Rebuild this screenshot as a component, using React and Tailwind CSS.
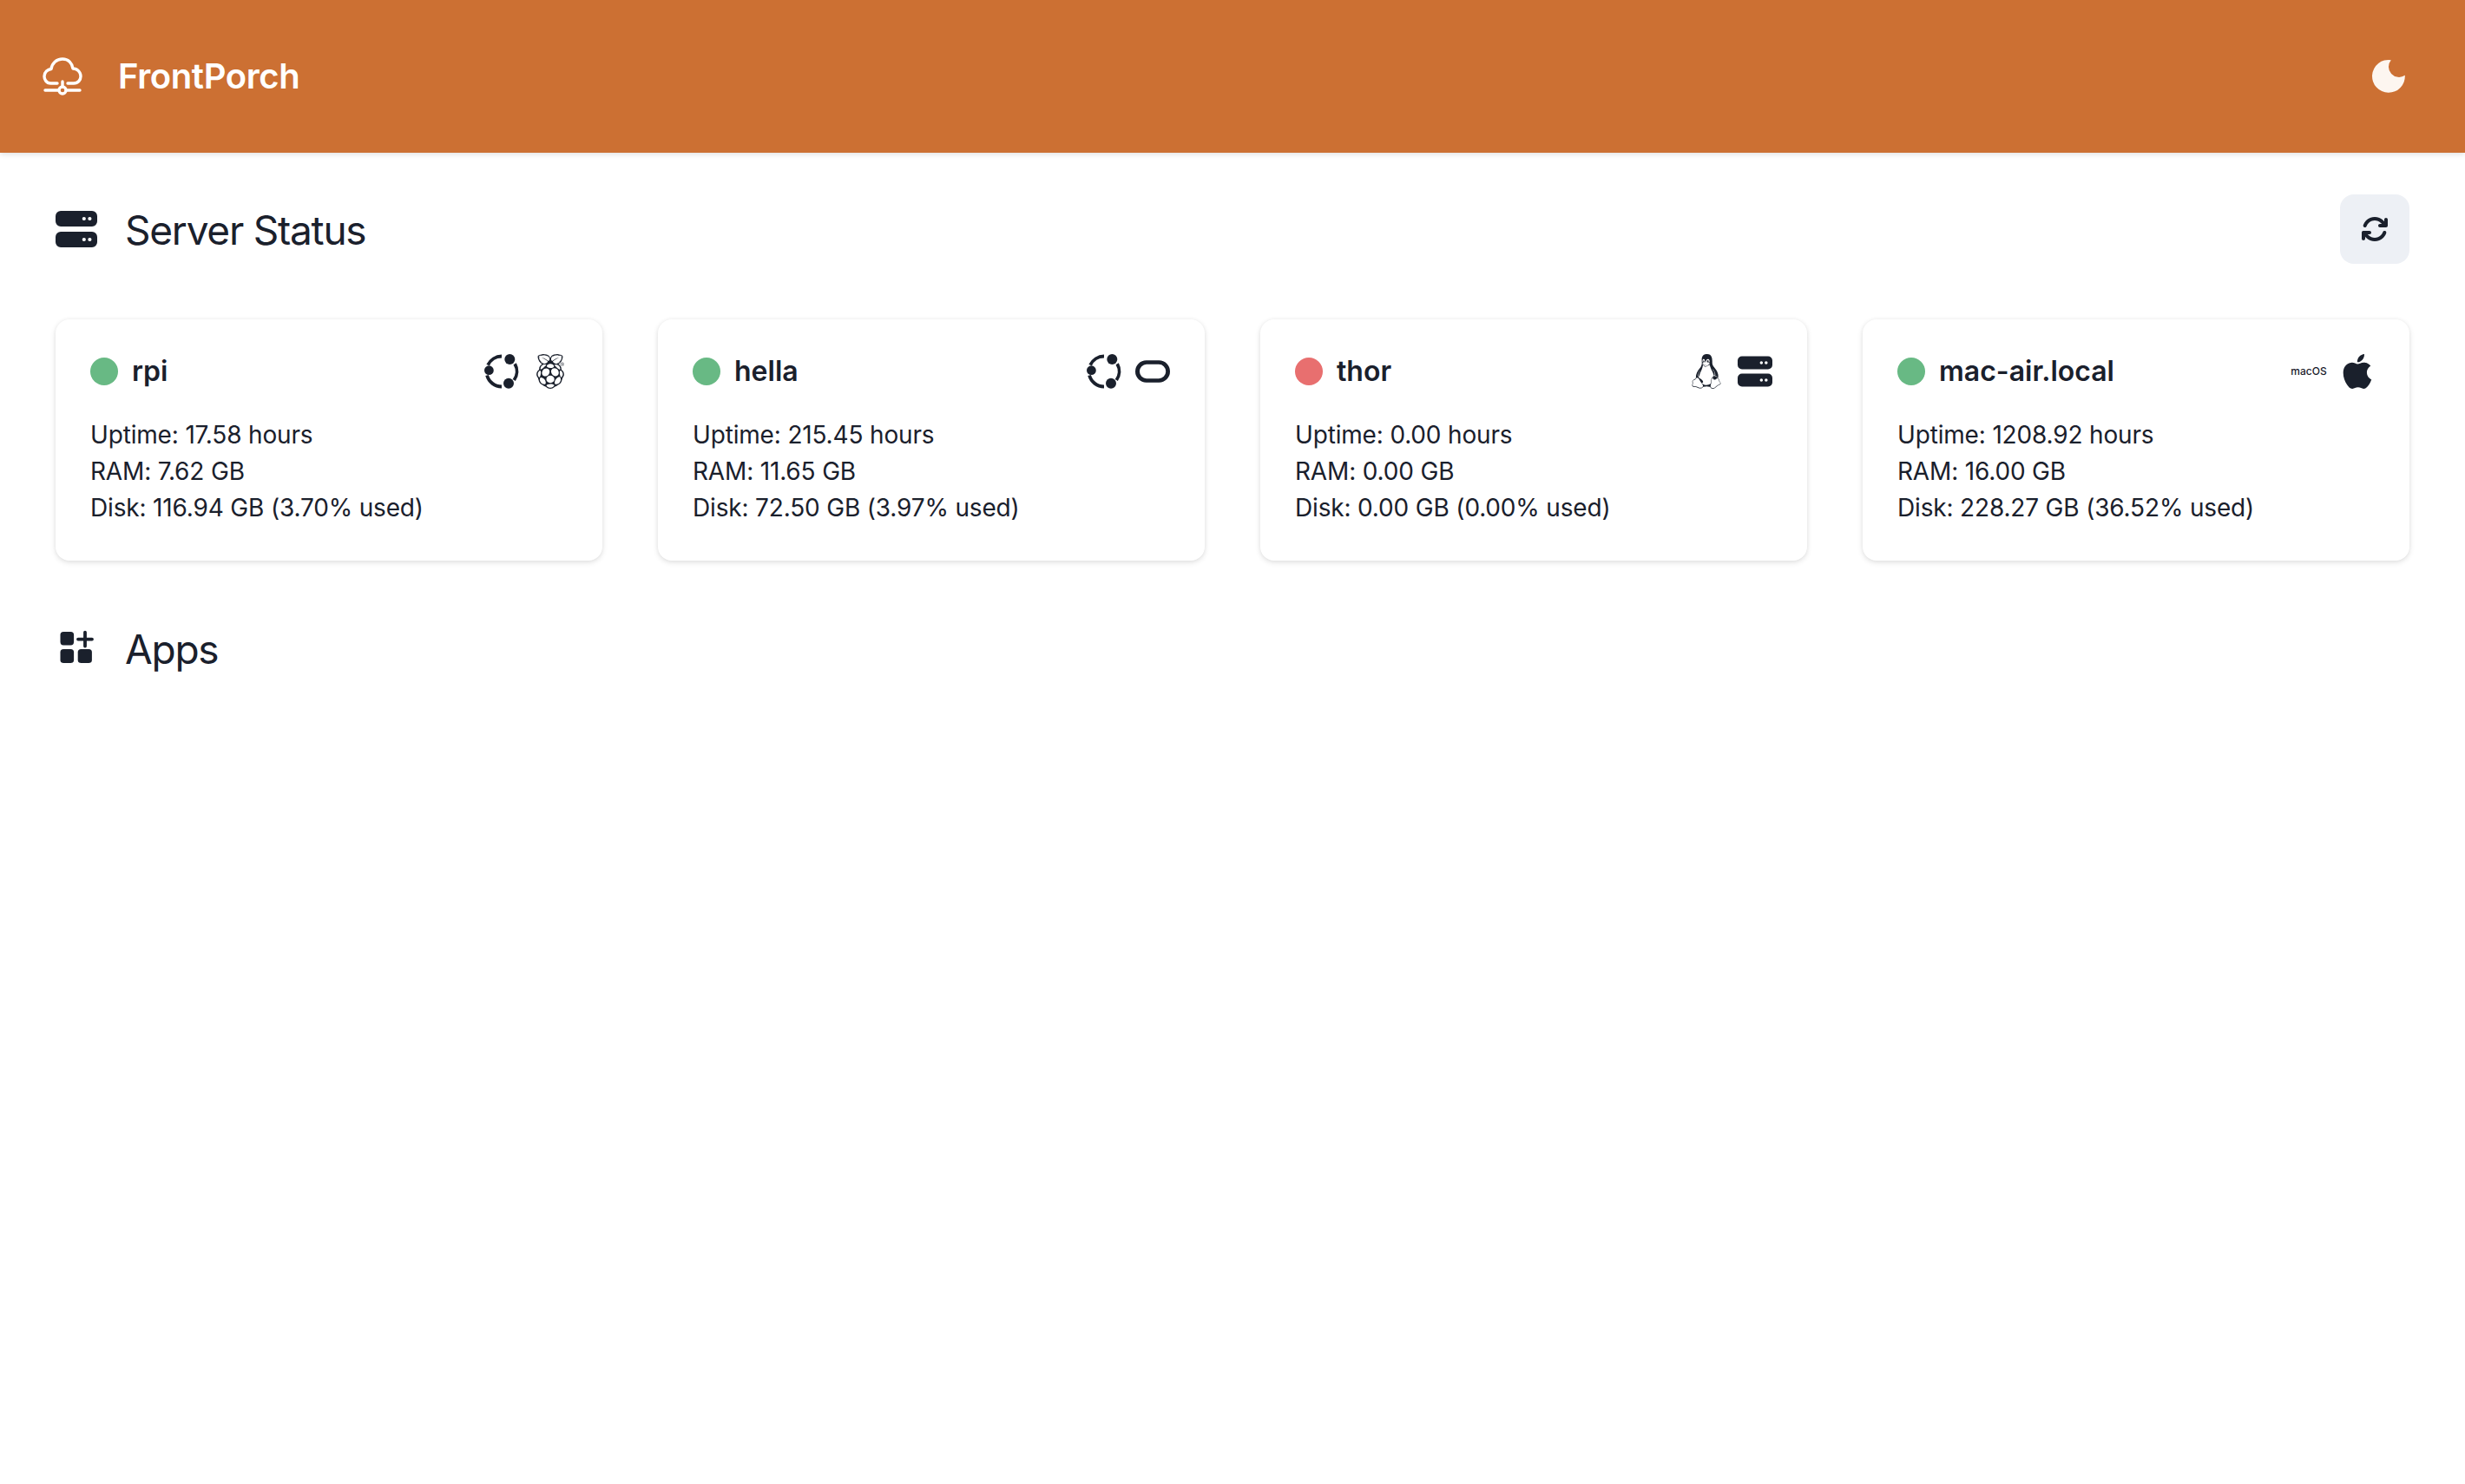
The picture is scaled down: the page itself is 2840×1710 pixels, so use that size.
import React from "react";
import { SiOracle, SiRaspberrypi, SiLinux, SiApple } from "react-icons/si";
import { FaArrowsRotate } from "react-icons/fa6";

const Ubuntu = () => (
  <svg viewBox="0 0 40 40" className="w-10 h-10" fill="none">
    <g stroke="#1a202c" strokeWidth="3.8">
      <path d="M35.2 11.25A17.5 17.5 0 0 1 34.3 30" />
      <path d="M20 37.5A17.5 17.5 0 0 1 3.1 24.5" />
      <path d="M4.14 12.6A17.5 17.5 0 0 1 20 2.5" />
    </g>
    <g fill="#1a202c">
      <circle cx="29.3" cy="6" r="6" />
      <circle cx="5.4" cy="18.7" r="5.4" />
      <circle cx="28" cy="33.7" r="6" />
    </g>
  </svg>
);

const ServerIcon = ({ className }) => (
  <svg viewBox="0 0 24 24" className={className}>
    <path
      fillRule="evenodd"
      fill="#1a202c"
      d="M3 1.5h18a3 3 0 0 1 3 3v3a3 3 0 0 1-3 3H3a3 3 0 0 1-3-3v-3a3 3 0 0 1 3-3zM3 13.5h18a3 3 0 0 1 3 3v3a3 3 0 0 1-3 3H3a3 3 0 0 1-3-3v-3a3 3 0 0 1 3-3z"
    />
    <g fill="#ffffff">
      <circle cx="16.4" cy="6" r="1.05" />
      <circle cx="19.7" cy="6" r="1.05" />
      <circle cx="16.4" cy="18" r="1.05" />
      <circle cx="19.7" cy="18" r="1.05" />
    </g>
  </svg>
);

const servers = [
  {
    name: "rpi",
    up: true,
    uptime: "17.58",
    ram: "7.62",
    disk: "116.94 GB (3.70% used)",
    icons: [<Ubuntu key="a" />, <SiRaspberrypi key="b" className="w-10 h-10 text-[#1a202c]" />],
  },
  {
    name: "hella",
    up: true,
    uptime: "215.45",
    ram: "11.65",
    disk: "72.50 GB (3.97% used)",
    icons: [<Ubuntu key="a" />, <SiOracle key="b" className="w-10 h-10 text-[#1a202c]" />],
  },
  {
    name: "thor",
    up: false,
    uptime: "0.00",
    ram: "0.00",
    disk: "0.00 GB (0.00% used)",
    icons: [<SiLinux key="a" className="w-10 h-10 text-[#1a202c]" />, <ServerIcon key="b" className="w-10 h-10" />],
  },
  {
    name: "mac-air.local",
    up: true,
    uptime: "1208.92",
    ram: "16.00",
    disk: "228.27 GB (36.52% used)",
    icons: [
      <span key="a" className="w-10 h-10 flex items-center justify-center text-[12px] font-medium text-[#1a202c]">
        macOS
      </span>,
      <SiApple key="b" className="w-10 h-10 text-[#1a202c]" />,
    ],
  },
];

export default function App() {
  return (
    <div className="min-h-screen bg-white font-['Inter',sans-serif] text-[#1a202c]">
      <header className="h-[176px] bg-[#cc7033] px-12 flex items-center justify-between shadow-[0_2px_6px_rgba(0,0,0,0.12)]">
        <div className="flex items-center gap-10">
          <svg viewBox="0 0 48 48" className="w-12 h-12" fill="none" stroke="#ffffff" strokeWidth="3.4" strokeLinecap="round" strokeLinejoin="round">
            <path d="M18 32H10.5C5 32 3 27 3 24C3 19 7 16 11 15.5C12 9 17 4 24 4C31 4 35 9 36 15C41 15 45 19 45 24C45 28 42 32 37 32H30" />
            <path d="M24 30V36M4 40H19M29 40H44" />
            <circle cx="24" cy="40" r="4" />
          </svg>
          <span className="text-[40px] leading-[60px] font-semibold tracking-[-0.01em] text-white">FrontPorch</span>
        </div>
        <div className="w-20 h-20 flex items-center justify-center">
          <svg viewBox="0 0 40 40" className="w-10 h-10">
            <path fill="#fdf6f0" d="M22.8 1.2A18.9 18.9 0 1 0 38.8 18.8A12 12 0 0 1 22.8 1.2z" />
          </svg>
        </div>
      </header>

      <main className="px-16 pt-12">
        <div className="flex items-center justify-between mb-16">
          <div className="flex items-center gap-8">
            <ServerIcon className="w-12 h-12" />
            <h2 className="text-[46px] leading-[72px] font-normal tracking-[-0.027em] pt-[2px]">Server Status</h2>
          </div>
          <button className="w-20 h-20 rounded-2xl bg-[#edf0f5] flex items-center justify-center">
            <FaArrowsRotate className="w-8 h-8 text-[#1a202c]" />
          </button>
        </div>

        <div className="grid grid-cols-4 gap-16">
          {servers.map((s) => (
            <div
              key={s.name}
              className="rounded-2xl bg-white p-10 shadow-[0_2px_6px_rgba(0,0,0,0.12),0_0_4px_rgba(0,0,0,0.04)]"
            >
              <div className="flex items-center justify-between h-10 mb-8">
                <div className="flex items-center gap-4">
                  <span className={s.up ? "w-8 h-8 rounded-full bg-[#68b984]" : "w-8 h-8 rounded-full bg-[#e86f6f]"} />
                  <span className="text-[32px] leading-[48px] font-semibold">{s.name}</span>
                </div>
                <div className="flex items-center gap-4">{s.icons}</div>
              </div>
              <div className="text-[28px] leading-[42px] tracking-[-0.006em]">
                <p>Uptime: {s.uptime} hours</p>
                <p>RAM: {s.ram} GB</p>
                <p>Disk: {s.disk}</p>
              </div>
            </div>
          ))}
        </div>

        <div className="flex items-center gap-8 mt-[66px]">
          <svg viewBox="0 0 24 24" className="w-12 h-12" fill="#1a202c">
            <rect x="2.75" y="2" width="7.8" height="7.7" rx="1.8" />
            <rect x="2.75" y="12" width="7.8" height="8" rx="1.8" />
            <rect x="12.85" y="12" width="8.1" height="8" rx="1.8" />
            <path d="M17 2.3V10.3M13 6.3H21" stroke="#1a202c" strokeWidth="1.9" strokeLinecap="round" fill="none" />
          </svg>
          <h2 className="text-[46px] leading-[72px] font-normal tracking-[-0.027em]">Apps</h2>
        </div>
      </main>
    </div>
  );
}
